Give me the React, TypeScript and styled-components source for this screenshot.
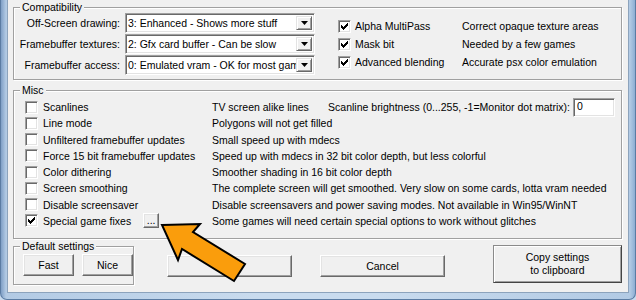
import styled, { createGlobalStyle } from "styled-components";

const GlobalStyle = createGlobalStyle`
  html, body {
    margin: 0;
    padding: 0;
    background: #c8dbee;
  }
  body {
    font-family: "Liberation Sans", Arial, sans-serif;
    font-size: 10.5px;
    color: #000;
  }
  * {
    box-sizing: border-box;
  }
`;

const combos = [
    {label: "Off-Screen drawing:", value: "3: Enhanced - Shows more stuff"},
    {label: "Framebuffer textures:", value: "2: Gfx card buffer - Can be slow"},
    {label: "Framebuffer access:", value: "0: Emulated vram - OK for most games"},
];

const compatChecks = [
    {name: "Alpha MultiPass", desc: "Correct opaque texture areas"},
    {name: "Mask bit", desc: "Needed by a few games"},
    {name: "Advanced blending", desc: "Accurate psx color emulation"},
];

const miscChecks = [
    {name: "Scanlines", desc: "TV screen alike lines", checked: false},
    {name: "Line mode", desc: "Polygons will not get filled", checked: false},
    {name: "Unfiltered framebuffer updates", desc: "Small speed up with mdecs", checked: false},
    {name: "Force 15 bit framebuffer updates", desc: "Speed up with mdecs in 32 bit color depth, but less colorful", checked: false},
    {name: "Color dithering", desc: "Smoother shading in 16 bit color depth", checked: false},
    {name: "Screen smoothing", desc: "The complete screen will get smoothed. Very slow on some cards, lotta vram needed", checked: false},
    {name: "Disable screensaver", desc: "Disable screensavers and power saving modes. Not available in Win95/WinNT", checked: false},
    {name: "Special game fixes", desc: "Some games will need certain special options to work without glitches", checked: true},
];

// classic 7x7 check glyph, column by column (top row of each 3px bar)
const checkCols = [2, 3, 4, 3, 2, 1, 0];

const CheckBox = ({checked}: { checked: boolean }) => (
    <Check>
        {checked && (
            <svg width="7" height="7" viewBox="0 0 7 7" shapeRendering="crispEdges">
                {checkCols.map((y, x) => <rect key={x} x={x} y={y} width="1" height="3" fill="#000"/>)}
            </svg>
        )}
    </Check>
);

const Combo = ({value}: { value: string }) => (
    <ComboBox>
        <ComboText>{value}</ComboText>
        <ComboButton>
            <svg width="7" height="4" viewBox="0 0 7 4">
                <polygon points="0,0 7,0 3.5,4" fill="#000"/>
            </svg>
        </ComboButton>
    </ComboBox>
);

export default function App() {
    return (
        <>
            <GlobalStyle/>
            <Frame>
                <Panel>
                    <Group $top={1}>
                        <Caption>Compatibility</Caption>
                        <CompatBody>
                            <ComboGrid>
                                {combos.map(c => (
                                    <>
                                        <FieldLabel key={c.label}>{c.label}</FieldLabel>
                                        <Combo key={c.value} value={c.value}/>
                                    </>
                                ))}
                            </ComboGrid>
                            <CompatChecks>
                                {compatChecks.map(c => (
                                    <>
                                        <CheckBox key={c.name + "box"} checked/>
                                        <span key={c.name}>{c.name}</span>
                                        <span key={c.desc}>{c.desc}</span>
                                    </>
                                ))}
                            </CompatChecks>
                        </CompatBody>
                    </Group>

                    <Group $top={4}>
                        <Caption>Misc</Caption>
                        <MiscGrid>
                            {miscChecks.map((c, i) => (
                                <>
                                    <CheckBox key={c.name + "box"} checked={c.checked}/>
                                    <NameCell key={c.name}>
                                        {c.name}
                                        {i === miscChecks.length - 1 && (
                                            <PushButton $w={16} $h={15} $left={12}>...</PushButton>
                                        )}
                                    </NameCell>
                                    <DescCell key={c.desc}>
                                        {c.desc}
                                        {i === 0 && (
                                            <Brightness>
                                                Scanline brightness (0...255, -1=Monitor dot matrix):
                                                <TextField>0</TextField>
                                            </Brightness>
                                        )}
                                    </DescCell>
                                </>
                            ))}
                        </MiscGrid>
                    </Group>

                    <BottomRow>
                        <Group $top={1}>
                            <Caption>Default settings</Caption>
                            <DefaultButtons>
                                <PushButton $w={51} $h={22}>Fast</PushButton>
                                <PushButton $w={51} $h={22}>Nice</PushButton>
                            </DefaultButtons>
                        </Group>
                        <PushButton $w={125} $h={22} $top={16} $left={33}>OK</PushButton>
                        <PushButton $w={125} $h={22} $top={16} $left={28}>Cancel</PushButton>
                        <CopyButton $w={129} $h={38} $top={6}>
                            Copy settings<br/>to clipboard
                        </CopyButton>
                    </BottomRow>
                </Panel>

                <Pointer width="636" height="300" viewBox="0 0 636 300">
                    <polygon
                        points="161,225 199,224 192,232 244,264 233,281 181,249 177,260"
                        fill="#fa9d0c"
                        stroke="#000"
                        strokeWidth="2"
                        strokeLinejoin="miter"
                    />
                </Pointer>
            </Frame>
        </>
    );
}

const Frame = styled.div`
    position: relative;
    width: 636px;
    height: 300px;
    padding: 0 6px 6px 6px;
    display: flex;
    border: 1px solid #5b7ca3;
    border-top: none;
    border-radius: 0 0 7px 7px;
    background: linear-gradient(to right, #7f9fc6 0, #b2cae4 5px, #c9dbee 40%, #c9dbee 60%, #b2cae4 calc(100% - 5px), #8eaed3 100%);
`

const Panel = styled.div`
    flex: 1;
    display: flex;
    flex-direction: column;
    padding: 0 6px 0 5px;
    background: #f0f0f0;
    border: 1px solid #8ca3bc;
    border-top: none;
`

const Group = styled.fieldset<{ $top: number }>`
    margin: ${p => p.$top}px 0 0 0;
    padding: 0;
    min-width: 0;
    border: 1px solid #a0a0a0;
    box-shadow: inset 1px 1px 0 #fff, 1px 1px 0 #fff;
`

const Caption = styled.legend`
    position: relative;
    margin-left: 6px;
    padding: 0 2px;
    line-height: 12px;
    background: #f0f0f0;
`

const CompatBody = styled.div`
    display: flex;
    align-items: flex-start;
    padding: 0 0 4px 0;
`

const ComboGrid = styled.div`
    display: grid;
    grid-template-columns: 106px 190px;
    grid-auto-rows: 20px;
    column-gap: 5px;
    row-gap: 1px;
    align-items: center;
`

const FieldLabel = styled.span`
    text-align: right;
    white-space: nowrap;
`

const ComboBox = styled.div`
    height: 20px;
    display: flex;
    padding: 2px;
    background: #fff;
    border: 1px solid;
    border-color: #a0a0a0 #fff #fff #a0a0a0;
    box-shadow: inset 1px 1px 0 #696969, inset -1px -1px 0 #e3e3e3;
`

const ComboText = styled.span`
    flex: 1;
    overflow: hidden;
    white-space: nowrap;
    line-height: 14px;
`

const ComboButton = styled.span`
    width: 16px;
    display: flex;
    align-items: center;
    justify-content: center;
    background: #f0f0f0;
    border: 1px solid;
    border-color: #e3e3e3 #696969 #696969 #e3e3e3;
    box-shadow: inset 1px 1px 0 #fff, inset -1px -1px 0 #a0a0a0;
`

const CompatChecks = styled.div`
    display: grid;
    grid-template-columns: 13px 103px auto;
    grid-auto-rows: 18px;
    column-gap: 4px;
    align-items: center;
    margin: 4px 0 0 23px;
    white-space: nowrap;
`

const Check = styled.span`
    width: 13px;
    height: 13px;
    display: flex;
    align-items: center;
    justify-content: center;
    background: #fff;
    border: 1px solid;
    border-color: #a0a0a0 #fff #fff #a0a0a0;
    box-shadow: inset 1px 1px 0 #696969, inset -1px -1px 0 #e3e3e3;
`

const MiscGrid = styled.div`
    display: grid;
    grid-template-columns: 13px 164px 1fr;
    grid-auto-rows: 16.25px;
    column-gap: 5px;
    align-items: center;
    padding: 3px 6px 9px 11px;
    white-space: nowrap;
`

const NameCell = styled.span`
    display: flex;
    align-items: center;
`

const DescCell = styled.span`
    display: flex;
    align-items: center;
`

const Brightness = styled.span`
    display: flex;
    align-items: center;
    gap: 3px;
    margin-left: auto;
`

const TextField = styled.span`
    width: 42px;
    height: 19px;
    margin: -2px 0;
    padding: 0 3px;
    line-height: 15px;
    background: #fff;
    border: 1px solid;
    border-color: #a0a0a0 #fff #fff #a0a0a0;
    box-shadow: inset 1px 1px 0 #696969, inset -1px -1px 0 #e3e3e3;
`

const BottomRow = styled.div`
    display: flex;
    align-items: flex-start;
`

const DefaultButtons = styled.div`
    display: flex;
    gap: 8px;
    padding: 2px 0 8px 9px;
`

const PushButton = styled.button<{ $w: number; $h: number; $top?: number; $left?: number }>`
    width: ${p => p.$w}px;
    height: ${p => p.$h}px;
    margin: ${p => p.$top ?? 0}px 0 0 ${p => p.$left ?? 0}px;
    padding: 0;
    font: inherit;
    line-height: 13px;
    color: #000;
    background: #f0f0f0;
    border: 1px solid;
    border-color: #fff #696969 #696969 #fff;
    box-shadow: inset -1px -1px 0 #a0a0a0, inset 1px 1px 0 #e3e3e3;
    flex-shrink: 0;
`

const CopyButton = styled(PushButton)`
    margin-left: auto;
    border-color: #8a8a8a #444 #444 #8a8a8a;
    box-shadow: inset 1px 1px 0 #fff, inset -1px -1px 0 #a0a0a0;
`

const Pointer = styled.svg`
    position: absolute;
    left: 0;
    top: 0;
    pointer-events: none;
`
